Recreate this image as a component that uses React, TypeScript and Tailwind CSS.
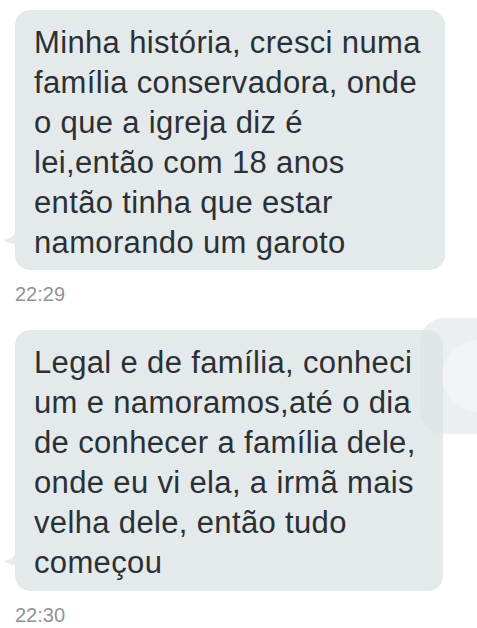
import React from 'react';

const Tail: React.FC = () => (
  <svg
    className="absolute left-[-13px] bottom-[24px]"
    width="16"
    height="18"
    viewBox="0 0 16 18"
  >
    <path d="M16 0 C14 7 8 11 1 12 C6 15 12 16 16 17 Z" fill="#e4e9ec" opacity="0.85" />
  </svg>
);

interface BubbleProps {
  lines: string[];
  time: string;
  className?: string;
}

const Bubble: React.FC<BubbleProps> = ({ lines, time, className = '' }) => (
  <div className="flex flex-col">
    <div className={`relative rounded-[15px] bg-[#e4e9ec] pl-[19px] pt-[13px] ${className}`}>
      <Tail />
      <p className="text-[31px] leading-[40px] text-[#2b3034] tracking-[0.35px]">
        {lines.map((l, i) => (
          <React.Fragment key={i}>
            {l}
            {i < lines.length - 1 && <br />}
          </React.Fragment>
        ))}
      </p>
    </div>
    <span className="mt-[13px] text-[20px] leading-[22px] text-[#8f949a]">{time}</span>
  </div>
);

export default function App() {
  return (
    <div
      className="relative h-[628px] w-[477px] overflow-hidden bg-white pl-[15px] pt-[10px]"
      style={{ fontFamily: '"Liberation Sans", Arial, sans-serif' }}
    >
      <div className="flex flex-col gap-[25px]">
        <Bubble
          className="h-[260px] w-[430px]"
          time="22:29"
          lines={[
            'Minha história, cresci numa',
            'família conservadora, onde',
            'o que a igreja diz é',
            'lei,então com 18 anos',
            'então tinha que estar',
            'namorando um garoto',
          ]}
        />
        <Bubble
          className="h-[261px] w-[428px]"
          time="22:30"
          lines={[
            'Legal e de família, conheci',
            'um e namoramos,até o dia',
            'de conhecer a família dele,',
            'onde eu vi ela, a irmã mais',
            'velha dele, então tudo',
            'começou',
          ]}
        />
      </div>
      <div className="absolute left-[420px] top-[318px] h-[116px] w-[80px] rounded-[24px] bg-[#dde2e5]/55">
        <div className="ml-[22px] mt-[22px] h-[72px] w-[72px] rounded-full bg-white/25" />
      </div>
    </div>
  );
}
